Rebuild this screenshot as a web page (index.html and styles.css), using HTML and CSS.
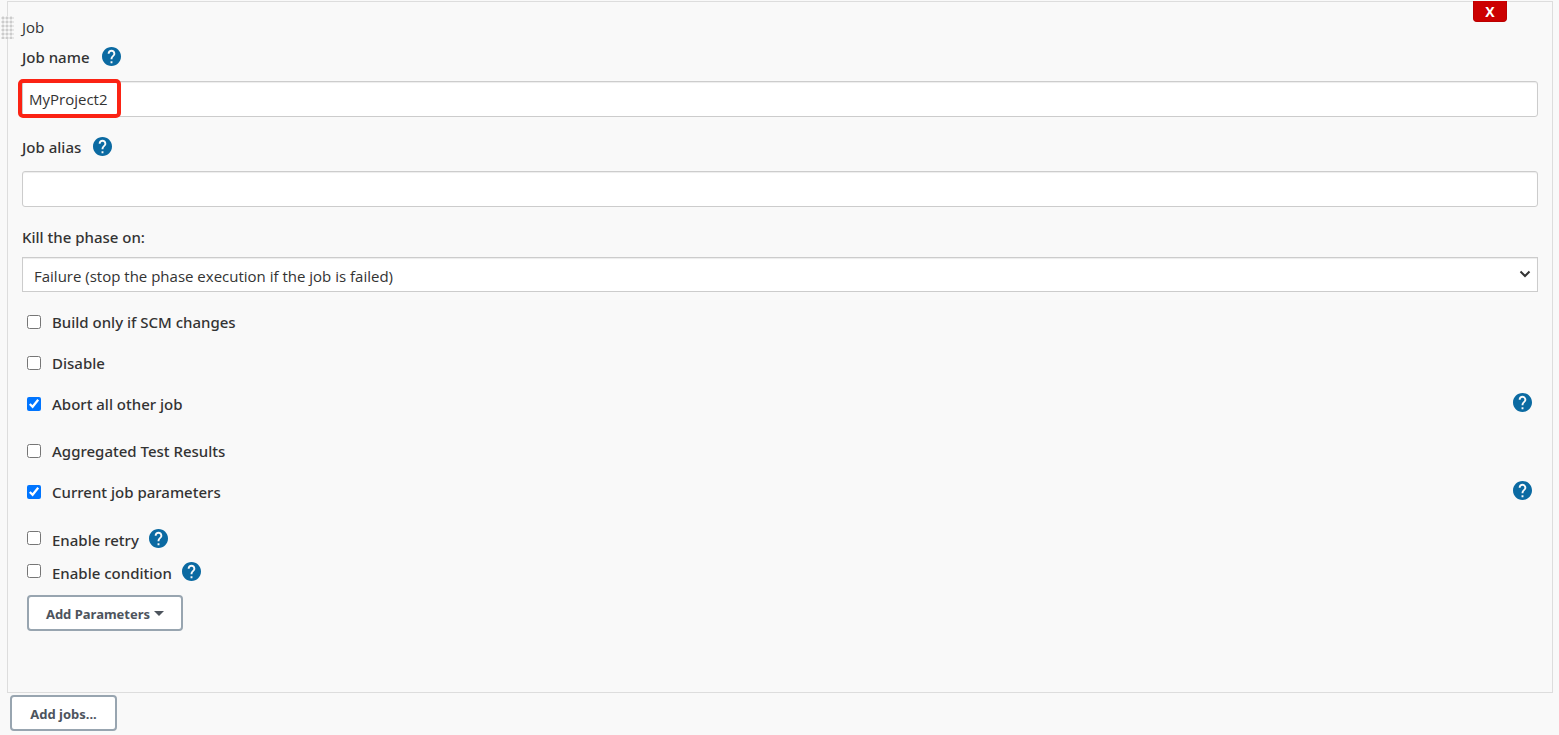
FILE: index.html
```html
<!DOCTYPE html>
<html lang="en">
<head>
    <meta charset="UTF-8">
    <meta name="viewport" content="width=device-width, initial-scale=1.0">
    <title>Job Configuration</title>
    <link rel="stylesheet" href="styles.css">
</head>
<body>

    <!-- Shared help icon -->
    <svg class="sprite" aria-hidden="true">
        <symbol id="help" viewBox="2 2 20 20">
            <path d="M12 2C6.48 2 2 6.48 2 12s4.480 10 10 10 10-4.480 10-10S17.520 2 12 2zm1 17h-2v-2h2v2zm2.070-7.750l-.9.920C13.450 12.900 13 13.500 13 15h-2v-.5c0-1.100.450-2.100 1.170-2.830l1.240-1.260c.370-.360.590-.860.590-1.410 0-1.100-.9-2-2-2s-2 .9-2 2H8c0-2.210 1.790-4 4-4s4 1.790 4 4c0 .880-.360 1.680-.930 2.250z"/>
        </symbol>
    </svg>

    <form class="jobs">
        <div class="job-panel">
            <div class="drag-handle"></div>
            <button type="button" class="delete-btn">X</button>

            <div class="title">Job</div>

            <div class="label-row">
                <label for="jobName">Job name</label>
                <a href="#" class="help" aria-label="Help for job name"><svg><use href="#help"/></svg></a>
            </div>
            <div class="field">
                <input type="text" id="jobName" value="MyProject2">
                <div class="highlight"></div>
            </div>

            <div class="label-row">
                <label for="jobAlias">Job alias</label>
                <a href="#" class="help" aria-label="Help for job alias"><svg><use href="#help"/></svg></a>
            </div>
            <div class="field">
                <input type="text" id="jobAlias">
            </div>

            <div class="label-row">
                <label for="killPhase">Kill the phase on:</label>
            </div>
            <div class="select-wrap">
                <select id="killPhase">
                    <option>Failure (stop the phase execution if the job is failed)</option>
                </select>
                <svg class="arrow" viewBox="0 0 12 8"><path d="M1.500 1.500L6 6l4.500-4.500"/></svg>
            </div>

            <!-- Options -->
            <div class="check-group">
                <div class="check-row">
                    <input type="checkbox" id="scm">
                    <label for="scm">Build only if SCM changes</label>
                </div>
                <div class="check-row">
                    <input type="checkbox" id="disable">
                    <label for="disable">Disable</label>
                </div>
                <div class="check-row">
                    <input type="checkbox" id="abort" checked>
                    <label for="abort">Abort all other job</label>
                    <a href="#" class="help end" aria-label="Help for abort all other job"><svg><use href="#help"/></svg></a>
                </div>
            </div>
            <div class="check-group">
                <div class="check-row">
                    <input type="checkbox" id="aggregated">
                    <label for="aggregated">Aggregated Test Results</label>
                </div>
                <div class="check-row">
                    <input type="checkbox" id="params" checked>
                    <label for="params">Current job parameters</label>
                    <a href="#" class="help end" aria-label="Help for current job parameters"><svg><use href="#help"/></svg></a>
                </div>
            </div>
            <div class="check-group compact">
                <div class="check-row">
                    <input type="checkbox" id="retry">
                    <label for="retry">Enable retry</label>
                    <a href="#" class="help" aria-label="Help for enable retry"><svg><use href="#help"/></svg></a>
                </div>
                <div class="check-row">
                    <input type="checkbox" id="condition">
                    <label for="condition">Enable condition</label>
                    <a href="#" class="help" aria-label="Help for enable condition"><svg><use href="#help"/></svg></a>
                </div>
            </div>

            <button type="button" class="btn btn-params">Add Parameters <span class="caret"></span></button>
        </div>

        <button type="button" class="btn btn-jobs">Add jobs...</button>
    </form>

</body>
</html>
```
FILE: styles.css
```css
* {
    margin: 0;
    padding: 0;
    box-sizing: border-box;
}

body {
    background-color: #f9f9f9;
    font-family: "Open Sans", "Noto Sans", sans-serif;
    font-size: 15px;
    color: #333;
}

.sprite {
    position: absolute;
    width: 0;
    height: 0;
}

.jobs {
    padding: 1px 6px 4px 7px;
}

/* Job panel */
.job-panel {
    position: relative;
    border: 1px solid #ddd;
    padding: 10px 14px 61px;
}

.drag-handle {
    position: absolute;
    left: -7px;
    top: 14px;
    width: 13px;
    height: 23px;
    background-color: #f9f9f9;
    background-image: radial-gradient(circle at 2px 2px, #ccc 1px, transparent 2px);
    background-size: 4px 4px;
}

.delete-btn {
    position: absolute;
    top: -1px;
    right: 45px;
    width: 34px;
    height: 21px;
    border: 1px solid #b00;
    border-top: none;
    border-radius: 0 0 4px 4px;
    background-color: #c00;
    color: #fff;
    font-family: inherit;
    font-size: 14px;
    font-weight: 700;
    cursor: pointer;
}

.title {
    line-height: 30px;
}

/* Labels and fields */
label {
    font-family: "Noto Sans", "Open Sans", sans-serif;
    font-weight: 500;
}

.label-row {
    display: flex;
    align-items: center;
    gap: 12px;
    height: 30px;
}

.help {
    width: 19px;
    height: 19px;
    margin-bottom: 2px;
}

.help svg {
    display: block;
    width: 19px;
    height: 19px;
    fill: #0b6aa2;
}

.help.end {
    margin-left: auto;
    margin-right: 6px;
}

.field {
    position: relative;
    margin: 9px 0 15px;
}

.field input {
    display: block;
    width: 100%;
    height: 36px;
    padding: 0 6px;
    border: 1px solid #ccc;
    border-radius: 3px;
    background-color: #fff;
    box-shadow: inset 0 1px 1px rgba(0, 0, 0, 0.075);
    font-family: inherit;
    font-size: 15px;
    color: #333;
}

.highlight {
    position: absolute;
    left: -4px;
    top: -2px;
    width: 103px;
    height: 39px;
    border: 4px solid #fb2314;
    border-radius: 5px;
}

.select-wrap {
    position: relative;
    margin: 5px 0 9px;
}

select {
    appearance: none;
    display: block;
    width: 100%;
    height: 35px;
    padding: 2px 11px 0;
    border: 1px solid #ccc;
    background-color: #fff;
    box-shadow: inset 0 1px 1px rgba(0, 0, 0, 0.075);
    font-family: inherit;
    font-size: 15px;
    color: #333;
}

.arrow {
    position: absolute;
    right: 7px;
    top: 13px;
    width: 12px;
    height: 8px;
    fill: none;
    stroke: #333;
    stroke-width: 2;
    pointer-events: none;
}

/* Checkboxes */
.check-group {
    margin-bottom: 6px;
}

.check-row {
    display: flex;
    align-items: center;
    height: 41px;
}

.check-row input {
    width: 14px;
    height: 14px;
    margin: 0 11px 0 5px;
}

.check-group.compact {
    margin: 11px 0 6px;
}

.compact .check-row {
    height: 33px;
}

.compact .check-row input {
    margin-bottom: 3px;
}

.compact .help {
    margin-left: 10px;
}

/* Buttons */
.btn {
    display: flex;
    align-items: center;
    justify-content: center;
    height: 36px;
    padding-top: 2px;
    border: 2px solid #98a5b0;
    border-radius: 4px;
    background-color: #fff;
    color: #4d545d;
    font-family: "Noto Sans", "Open Sans", sans-serif;
    font-size: 13px;
    font-weight: 700;
    cursor: pointer;
}

.btn-params {
    width: 156px;
    margin-left: 5px;
}

.btn-jobs {
    width: 107px;
    margin: 2px 0 0 3px;
}

.caret {
    margin: 0 0 2px 4px;
    border-top: 5px solid #4d545d;
    border-left: 5px solid transparent;
    border-right: 5px solid transparent;
}
```
